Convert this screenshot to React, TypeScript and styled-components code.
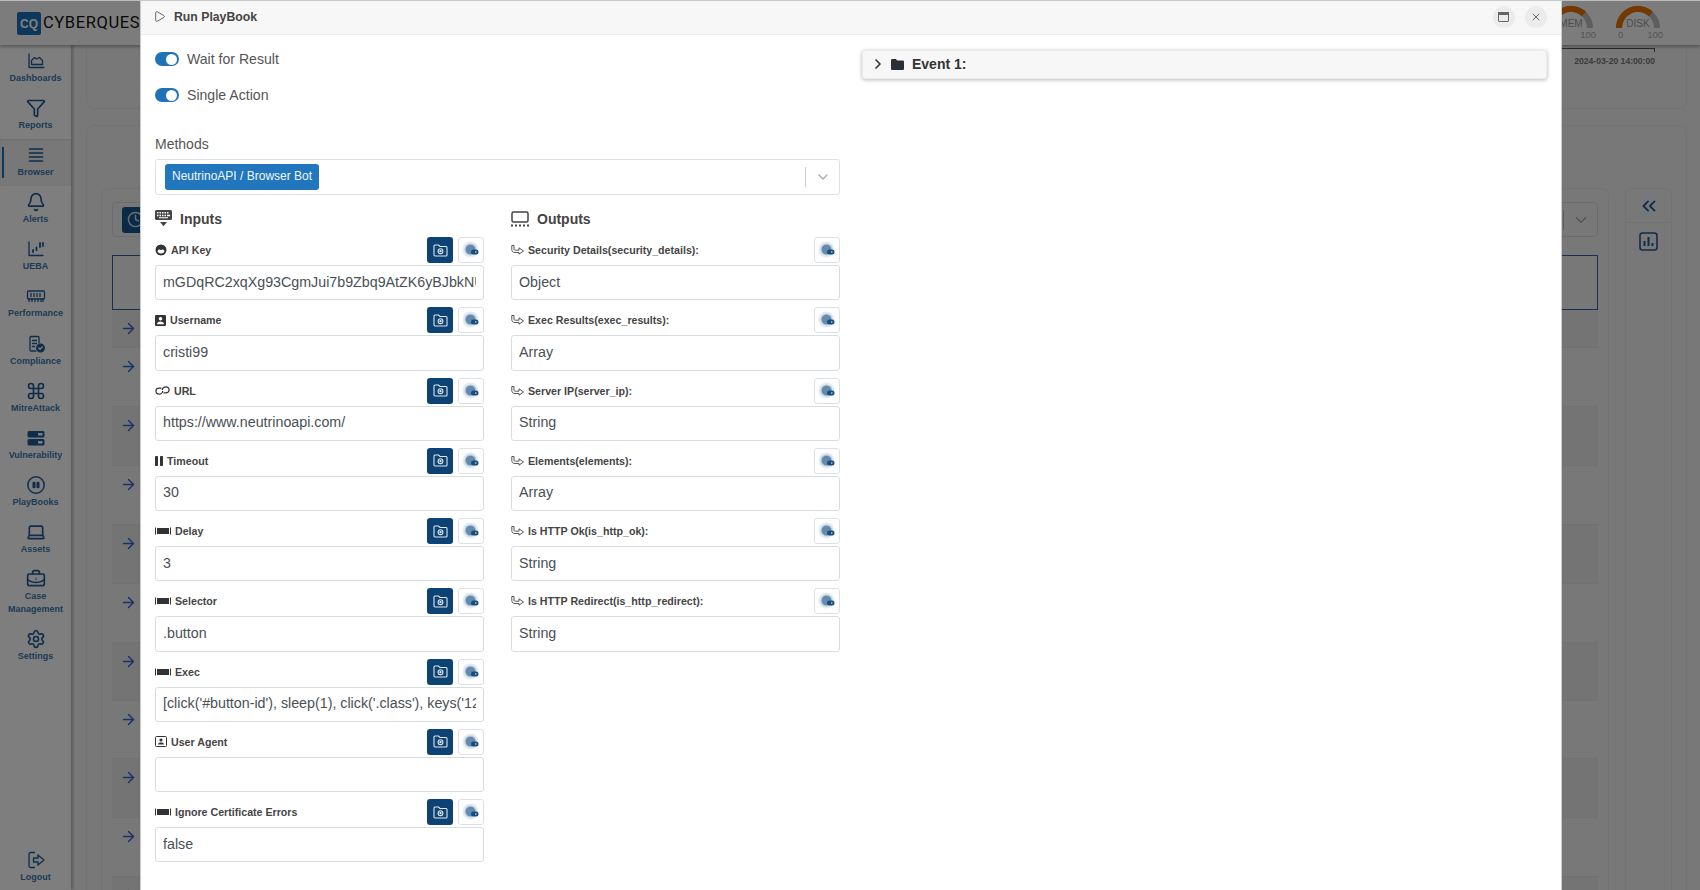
import React from 'react';
import styled, { createGlobalStyle } from 'styled-components';
import { ArrowRight, Bell, ChevronDown, ChevronRight, ChevronsLeft, Clock, Command, Filter, Laptop, BriefcaseBusiness, Settings, X, Play } from 'lucide-react';

const Global = createGlobalStyle`
  html, body { margin: 0; padding: 0; height: 100%; overflow: hidden; background: #fff; }
  body { font-family: "Liberation Sans", Arial, sans-serif; }
  * { box-sizing: border-box; }
`;

const Screen = styled.div`
  position: relative;
  width: 1700px;
  height: 890px;
  overflow: hidden;
  display: flex;
  flex-direction: column;
  background: #f1f1f1;
`;
const TopBar = styled.header`
  height: 45px;
  flex: none;
  background: #f9f9f9;
  box-shadow: 0 2px 3px rgba(0,0,0,.3);
  display: flex;
  align-items: flex-start;
  position: relative;
  z-index: 2;
`;
const Logo = styled.div`
  display: flex;
  align-items: center;
  gap: 2px;
  padding: 12px 0 0 17px;
`;
const LogoMark = styled.div`
  width: 24px;
  height: 23px;
  border-radius: 2px;
  background: #1b70b8;
  color: #fff;
  font: bold 12px "Liberation Sans", sans-serif;
  display: flex;
  align-items: center;
  justify-content: center;
`;
const LogoText = styled.span`
  font: 16.5px "Roboto", sans-serif;
  letter-spacing: .6px;
  color: #111;
  margin-top: -2px;
`;
const Gauges = styled.div`
  margin-left: auto;
  margin-right: 40px;
  display: flex;
  gap: 23px;
  padding-top: 5px;
`;
const Gauge = styled.div`
  width: 44px;
  position: relative;
  height: 36px;
`;
const GaugeLabel = styled.span`
  position: absolute;
  left: 0;
  right: 0;
  top: 13px;
  text-align: center;
  font: 10px "Liberation Sans", sans-serif;
  color: #999;
`;
const GaugeScale = styled.div`
  position: absolute;
  left: 2px;
  right: -3px;
  top: 24px;
  display: flex;
  justify-content: space-between;
  font: 9.5px "Liberation Sans", sans-serif;
  color: #aaa;
`;
const Body = styled.div`
  flex: 1;
  display: flex;
  min-height: 0;
`;
const Sidebar = styled.nav`
  width: 71px;
  flex: none;
  background: #fdfdfd;
  box-shadow: 2px 0 3px rgba(0,0,0,.25);
  display: flex;
  flex-direction: column;
  z-index: 1;
`;
const NavItem = styled.div<{ $active?: boolean; $bottom?: boolean; $tall?: boolean }>`
  position: relative;
  height: ${p => (p.$tall ? '60px' : '47.1px')};
  flex: none;
  padding-top: ${p => (p.$bottom ? '7px' : '6px')};
  display: flex;
  flex-direction: column;
  align-items: center;
  color: #1f5a94;
  background: ${p => (p.$active ? '#f0f0f0' : 'transparent')};
  margin-top: ${p => (p.$bottom ? 'auto' : '0')};
  ${p => p.$active ? `box-shadow: inset 0 1px 2px rgba(0,0,0,.1);` : ''}
  svg { width: 20px; height: 20px; display: block; flex: none; }
`;
const ActiveBar = styled.i`
  position: absolute;
  left: 2px;
  top: 8px;
  bottom: 8px;
  width: 1.5px;
  background: #1b70b8;
`;
const NavLabel = styled.span`
  font: bold 9px/13px "Liberation Sans", sans-serif;
  text-align: center;
  margin-top: 1px;
  color: #3a76ae;
`;
const Main = styled.main`
  flex: 1;
  min-width: 0;
  padding: 0 13px 0 15px;
  display: flex;
  flex-direction: column;
  gap: 16px;
`;
const TimeCard = styled.section`
  height: 64px;
  flex: none;
  border: 1px solid #e6e6e6;
  border-top: none;
  border-radius: 0 0 8px 8px;
  display: flex;
  flex-direction: column;
  align-items: flex-end;
  padding: 3px 31px 0 0;
`;
const TimeLine = styled.div`
  width: 120px;
  height: 4px;
  border-top: 1px solid #555;
  border-right: 1px solid #555;
`;
const TimeStamp = styled.span`
  font: bold 8.6px/14px "Liberation Sans", sans-serif;
  color: #777;
  margin-top: 2px;
  white-space: nowrap;
`;
const OuterCard = styled.section`
  flex: 1;
  border: 1px solid #e6e6e6;
  border-radius: 8px 8px 0 0;
  border-bottom: none;
  padding: 62px 14px 0 14px;
  display: flex;
  gap: 16px;
  min-height: 0;
`;
const InnerCard = styled.div`
  flex: 1;
  min-width: 0;
  border: 1px solid #e6e6e6;
  border-bottom: none;
  border-radius: 8px 8px 0 0;
  padding: 13px 10px 0 10px;
`;
const Toolbar = styled.div`
  height: 35px;
  border: 1px solid #d8d8d8;
  border-radius: 4px;
  padding-left: 9px;
  padding-right: 7px;
  display: flex;
  align-items: center;
  justify-content: space-between;
`;
const ClockButton = styled.div`
  width: 26px;
  height: 26px;
  background: #14568f;
  border-radius: 3px;
  color: #ddd;
  display: flex;
  align-items: center;
  justify-content: center;
`;
const SelectEnd = styled.div`
  display: flex;
  align-items: center;
  gap: 8px;
  color: #aaa;
  &::before { content: ''; width: 1px; height: 20px; background: #bbb; }
`;
const TableBox = styled.div`
  margin-top: 18px;
  height: 55px;
  border: 1px solid #2d62a0;
`;
const Row = styled.div<{ $stripe: boolean; $h: number }>`
  height: ${p => p.$h}px;
  padding: 10px 0 0 8px;
  color: #2a62d0;
  background: ${p => (p.$stripe ? '#e9e9e9' : 'transparent')};
  border-bottom: 1px solid #e2e2e2;
  svg { display: block; }
`;
const SidePanel = styled.aside`
  width: 47px;
  flex: none;
  border: 1px solid #e6e6e6;
  border-bottom: none;
  border-radius: 6px 6px 0 0;
  color: #1f5a94;
  display: flex;
  flex-direction: column;
  align-items: center;
`;
const PanelHead = styled.div`
  width: 100%;
  height: 34px;
  display: flex;
  align-items: center;
  justify-content: center;
  border-bottom: 1px solid #e4e4e4;
`;
const PanelChart = styled.div`
  margin-top: 9px;
`;
const Overlay = styled.div`
  position: absolute;
  inset: 0;
  background: rgba(0,0,0,.5);
  z-index: 5;
  border-top: 1px solid rgba(255,255,255,.5);
`;
const Modal = styled.div`
  position: absolute;
  left: 140px;
  top: 0;
  width: 1422px;
  height: 890px;
  background: #fff;
  border: 1px solid #c9c9c9;
  border-bottom: none;
  z-index: 6;
  display: flex;
  flex-direction: column;
`;
const ModalHead = styled.div`
  height: 33.5px;
  flex: none;
  background: #f7f7f7;
  border-bottom: 1px solid #e9ecef;
  display: flex;
  align-items: center;
  padding: 0 14px 1px 12px;
  color: #444;
`;
const ModalTitle = styled.span`
  font: bold 12.25px "Liberation Sans", sans-serif;
  color: #444;
  margin-left: 8px;
`;
const HeadButton = styled.button`
  width: 22px;
  height: 22px;
  border: 0;
  padding: 0;
  border-radius: 50%;
  background: #ececec;
  color: #666;
  display: flex;
  align-items: center;
  justify-content: center;
  margin-left: 10.5px;
  &:first-of-type { margin-left: auto; }
`;
const ModalBody = styled.div`
  flex: 1;
  display: grid;
  grid-template-columns: 685px 685px;
  column-gap: 22px;
  padding: 0 0 0 14px;
  min-height: 0;
`;
const LeftPane = styled.div`
  display: flex;
  flex-direction: column;
  margin-top: -.5px;
`;
const ToggleRow = styled.label<{ $first?: boolean }>`
  display: flex;
  align-items: center;
  gap: 8px;
  height: 16px;
  margin-top: ${p => (p.$first ? '17px' : '20px')};
  font-size: 14.1px;
  color: #555;
`;
const Toggle = styled.span`
  width: 24px;
  height: 14.5px;
  border-radius: 8px;
  background: #1f72b8;
  display: flex;
  justify-content: flex-end;
  align-items: center;
  padding-right: 2px;
  &::after { content: ''; width: 11px; height: 11px; border-radius: 50%; background: #fff; }
`;
const MethodsLabel = styled.div`
  font-size: 14px;
  line-height: 16px;
  color: #555;
  margin-top: 33px;
`;
const MethodsSelect = styled.div`
  margin-top: 7px;
  height: 36px;
  border: 1px solid #dde1e5;
  border-radius: 3px;
  display: flex;
  align-items: center;
  padding: 0 8px 0 9px;
`;
const Tag = styled.span`
  height: 26px;
  padding: 0 7px;
  background: #2176bd;
  border-radius: 3px;
  color: #f0f6fb;
  font-size: 12px;
  line-height: 25px;
  white-space: nowrap;
`;
const SelectTail = styled.div`
  margin-left: auto;
  display: flex;
  align-items: center;
  gap: 9px;
  color: #aaa;
  &::before { content: ''; width: 1px; height: 20px; background: #ccc; }
`;
const Columns = styled.div`
  display: grid;
  grid-template-columns: 328.5px 328.5px;
  column-gap: 27.5px;
  margin-top: 14px;
`;
const Column = styled.div``;
const ColumnHead = styled.div`
  height: 19px;
  display: flex;
  align-items: center;
  gap: 8px;
  font: bold 14px "Liberation Sans", sans-serif;
  color: #444;
  margin-bottom: 9px;
`;
const Field = styled.div`
  height: 70.25px;
`;
const FieldTop = styled.div`
  height: 26px;
  display: flex;
  align-items: center;
  gap: 4.5px;
  margin-bottom: 2px;
`;
const FieldLabel = styled.div`
  display: flex;
  align-items: center;
  gap: 4px;
  font: bold 10.65px "Liberation Sans", sans-serif;
  color: #444;
  margin-right: auto;
  svg { flex: none; color: #333; }
`;
const CamButton = styled.button`
  width: 26px;
  height: 26px;
  padding: 0;
  border: 0;
  border-radius: 3px;
  background: #0d4374;
  color: #dfe6ee;
  display: flex;
  align-items: center;
  justify-content: center;
`;
const VarButton = styled.button`
  width: 26px;
  height: 26px;
  padding: 0;
  border: 1px solid #dde1e5;
  border-radius: 3px;
  background: #fff;
  display: flex;
  align-items: center;
  justify-content: center;
`;
const Input = styled.input`
  display: block;
  width: 100%;
  height: 35.25px;
  border: 1px solid #d8dde2;
  border-radius: 3px;
  padding: 0 7px 2px;
  font: 14.25px "Liberation Sans", sans-serif;
  color: #495057;
  background: #fff;
  outline: none;
`;
const EventBar = styled.div`
  margin-top: 15px;
  height: 29.5px;
  width: 685px;
  background: #f7f7f7;
  border: 1px solid #eaeaea;
  border-radius: 3px;
  box-shadow: 0 1px 4px rgba(0,0,0,.28);
  display: flex;
  align-items: center;
  padding-left: 7px;
  gap: 5px;
  font: bold 14px "Liberation Sans", sans-serif;
  color: #333;
`;
const EventTitle = styled.span`
  margin-left: 3px;
`;

const FaceIcon = () => (
  <svg width="12" height="12" viewBox="0 0 12 12"><path fill="currentColor" fillRule="evenodd" d="M6 .5a5.5 5.5 0 1 1 0 11 5.5 5.5 0 0 1 0-11zM2.5 7c0 .9 1.4 2.6 3.5 2.6S9.500 7.900 9.500 7c-.6-.9-1.100-1.500-1.800-1.500-.7 0-1 .5-1.700.5s-1-.5-1.700-.5C3.600 5.500 3.100 6.100 2.500 7z"/></svg>
);
const UserBoxIcon = () => (
  <svg width="11" height="11" viewBox="0 0 11 11"><path fill="currentColor" fillRule="evenodd" d="M1 0h9a1 1 0 0 1 1 1v9a1 1 0 0 1-1 1H1a1 1 0 0 1-1-1V1a1 1 0 0 1 1-1zm4.500 2a1.800 1.800 0 1 0 0 3.600 1.800 1.800 0 0 0 0-3.600zM2 9.200h7c0-1.700-1.600-2.600-3.500-2.600S2 7.500 2 9.200z"/></svg>
);
const LinkIcon = () => (
  <svg width="15" height="11" viewBox="0 0 15 11" fill="none" stroke="currentColor" strokeWidth="1.200"><path d="M6.500 3.200 H4.300 C2.400 3.200 1 4.600 .9 6 C.8 7.700 2.200 9.200 4 9.200 C6 9.200 7.500 7.700 7.800 6"/><path d="M8.500 7.800 H10.700 C12.600 7.800 14 6.400 14.100 5 C14.200 3.300 12.800 1.800 11 1.800 C9 1.800 7.500 3.300 7.200 5"/></svg>
);
const PauseIcon = () => (
  <svg width="8" height="10" viewBox="0 0 8 10"><rect x="0" y="0" width="3" height="10" rx=".7" fill="currentColor"/><rect x="5" y="0" width="3" height="10" rx=".7" fill="currentColor"/></svg>
);
const BarIcon = () => (
  <svg width="16" height="8" viewBox="0 0 16 8"><rect x="0" y=".5" width="1" height="7" fill="currentColor"/><rect x="2" y="1" width="12" height="6" fill="currentColor"/><rect x="15" y=".5" width="1" height="7" fill="currentColor"/></svg>
);
const AgentIcon = () => (
  <svg width="12" height="11" viewBox="0 0 12 11"><rect x=".5" y=".5" width="11" height="10" rx="1" fill="none" stroke="currentColor"/><circle cx="6" cy="4" r="1.600" fill="currentColor"/><path fill="currentColor" d="M3 8.500c0-1.500 1.300-2.100 3-2.100s3 .6 3 2.100z"/></svg>
);
const ReturnIcon = () => (
  <svg width="13" height="10" viewBox="0 0 13 10" fill="none" stroke="#444" strokeWidth=".9" strokeLinejoin="round"><path d="M.8 .5 H3 V4 C3 5 3.500 5.200 4.500 5.200 H8 V2.800 L12.500 6 L8 9.200 V7.500 H4 C2 7.500 .8 6.500 .8 4.500 Z"/></svg>
);
const KeyboardHideIcon = () => (
  <svg width="17" height="17" viewBox="0 0 17 17"><path fill="currentColor" fillRule="evenodd" d="M1.500 0h14A1.500 1.500 0 0 1 17 1.500v7a1.500 1.500 0 0 1-1.500 1.500h-14A1.500 1.500 0 0 1 0 8.500v-7A1.500 1.500 0 0 1 1.500 0zM2 2v1.500h1.500V2zm2.500 0v1.500H6V2zM7 2v1.500h1.500V2zm2.500 0v1.500H11V2zM12 2v1.500h1.500V2zM2 4.800v1.500h1.500V4.800zm2.500 0v1.500H6V4.800zm2.500 0v1.500h1.500V4.800zm2.500 0v1.500H11V4.800zm2.500 0v1.500h3V4.800zM4 7.300v1h9v-1z"/><path fill="currentColor" d="M5 12h7l-3.500 4.200z"/></svg>
);
const MonitorDotsIcon = () => (
  <svg width="18" height="16" viewBox="0 0 18 16"><rect x="1" y="1" width="16" height="10" rx="1.500" fill="none" stroke="currentColor" strokeWidth="1.500"/><g fill="currentColor"><rect x="0" y="13.500" width="2" height="2"/><rect x="4" y="13.500" width="2" height="2"/><rect x="8" y="13.500" width="2" height="2"/><rect x="12" y="13.500" width="2" height="2"/><rect x="16" y="13.500" width="2" height="2"/></g></svg>
);
const CameraFolderIcon = () => (
  <svg width="15" height="13" viewBox="0 0 15 13" fill="none" stroke="currentColor" strokeWidth="1.100"><path d="M2 1h3.500l1.500 1.500H13a1 1 0 0 1 1 1V11a1 1 0 0 1-1 1H2a1 1 0 0 1-1-1V2a1 1 0 0 1 1-1z"/><circle cx="7.500" cy="7.200" r="2.400"/><circle cx="7.500" cy="7.200" r=".6" fill="currentColor"/></svg>
);
const VarIcon = () => (
  <svg width="24" height="24" viewBox="0 0 24 24"><circle cx="11.500" cy="11.500" r="8" fill="#e4ebf1"/><circle cx="11.500" cy="11.500" r="6" fill="#b6c7d7"/><circle cx="11.500" cy="11.500" r="4.800" fill="#648aad"/><rect x="12" y="11.500" width="7.500" height="5" rx="2.500" fill="#174d7e"/><circle cx="16.800" cy="14" r=".8" fill="#dfe7ee"/></svg>
);
const WindowIcon = () => (
  <svg width="11" height="10" viewBox="0 0 11 10" fill="none" stroke="currentColor"><rect x=".5" y=".5" width="10" height="9" rx=".5"/><rect x=".5" y=".5" width="10" height="2" fill="currentColor"/></svg>
);
const FolderIcon = () => (
  <svg width="13" height="11" viewBox="0 0 13 11"><path fill="#2a2f36" d="M1.200 0h3.600l1.400 1.500h5.600A1.200 1.200 0 0 1 13 2.700v7.100A1.200 1.200 0 0 1 11.800 11H1.200A1.200 1.200 0 0 1 0 9.800V1.200A1.200 1.200 0 0 1 1.200 0z"/></svg>
);
const BaseNav = ({ children }: { children: React.ReactNode }) => (
  <svg viewBox="0 0 20 20" fill="none" stroke="currentColor" strokeWidth="1.300" strokeLinecap="round" strokeLinejoin="round">{children}</svg>
);
const navIcons: Record<string, React.ReactNode> = {
  Dashboards: <BaseNav><path d="M3 3v13.500h15"/><path d="M5.500 13.500v-4l3-3 2 1.500 3-1.500 3 3v4z"/></BaseNav>,
  Browser: <BaseNav><path strokeWidth="1.700" d="M3.500 4h13M3.500 8h13M3.500 12h13M3.500 16h13"/></BaseNav>,
  UEBA: <BaseNav><path d="M3 3v13.500h14"/><path strokeWidth="1.800" d="M7 13v-2M10.500 11V8.500M14 8V4M17 7V4"/></BaseNav>,
  Performance: <BaseNav><rect x="1.500" y="5" width="17" height="8" rx="1"/><path d="M5 7.500v3M8 7.500v3M11 7.500v3M14 7.500v3M3 13v2.500M6 13v2.500M9 13v2.500M12 13v2.500M15 13v2.500M17 13v2.500"/></BaseNav>,
  Compliance: <BaseNav><path d="M13 9V3.500A1 1 0 0 0 12 2.500H5a1 1 0 0 0-1 1V16a1 1 0 0 0 1 1h5"/><path d="M6.500 6.500h4M6.500 9.500h4M6.500 12.500h2"/><circle cx="14.500" cy="14" r="3.800" fill="currentColor"/><path stroke="#fff" d="M12.800 14l1.200 1.200 2.200-2.200"/></BaseNav>,
  Vulnerability: <svg viewBox="0 0 20 20" fill="currentColor"><path fillRule="evenodd" d="M3 3h14a1.500 1.500 0 0 1 1.500 1.500V8A1.500 1.500 0 0 1 17 9.500H3A1.500 1.500 0 0 1 1.500 8V4.500A1.500 1.500 0 0 1 3 3zm9 2v2.500h4.500V5z"/><path fillRule="evenodd" d="M3 11h14a1.500 1.500 0 0 1 1.500 1.500V16a1.500 1.500 0 0 1-1.500 1.500H3A1.500 1.500 0 0 1 1.500 16v-3.500A1.500 1.500 0 0 1 3 11zm9 2v2.500h4.500V13z"/></svg>,
  PlayBooks: <svg viewBox="0 0 20 20"><circle cx="10" cy="10" r="8.200" fill="none" stroke="currentColor" strokeWidth="1.500"/><rect x="6.500" y="6.800" width="3" height="6.400" rx="1" fill="currentColor"/><rect x="10.500" y="6.800" width="3" height="6.400" rx="1" fill="currentColor"/></svg>,
  Logout: <BaseNav><path d="M8.500 2.500H4.500a1.500 1.500 0 0 0-1.500 1.500v12a1.500 1.500 0 0 0 1.500 1.500h4"/><path d="M7.500 8h4.500V5l6 5-6 5v-3H7.500z"/></BaseNav>,
};

const navItems = [
  { label: 'Dashboards' },
  { label: 'Reports', icon: <Filter /> },
  { label: 'Browser', active: true },
  { label: 'Alerts', icon: <Bell /> },
  { label: 'UEBA' },
  { label: 'Performance' },
  { label: 'Compliance' },
  { label: 'MitreAttack', icon: <Command /> },
  { label: 'Vulnerability' },
  { label: 'PlayBooks' },
  { label: 'Assets', icon: <Laptop /> },
  { label: 'Case Management', icon: <BriefcaseBusiness />, tall: true },
  { label: 'Settings', icon: <Settings /> },
];

const rows = [38, 58.500, 59, 59, 59, 59, 58.500, 58, 59, 59, 59];

const inputs = [
  { label: 'API Key', icon: <FaceIcon />, value: 'mGDqRC2xqXg93CgmJui7b9Zbq9AtZK6yBJbkNUxyTQ4vP' },
  { label: 'Username', icon: <UserBoxIcon />, value: 'cristi99' },
  { label: 'URL', icon: <LinkIcon />, value: 'https://www.neutrinoapi.com/' },
  { label: 'Timeout', icon: <PauseIcon />, value: '30' },
  { label: 'Delay', icon: <BarIcon />, value: '3' },
  { label: 'Selector', icon: <BarIcon />, value: '.button' },
  { label: 'Exec', icon: <BarIcon />, value: "[click('#button-id'), sleep(1), click('.class'), keys('12345'), sleep(2)]" },
  { label: 'User Agent', icon: <AgentIcon />, value: '' },
  { label: 'Ignore Certificate Errors', icon: <BarIcon />, value: 'false' },
];
const outputs = [
  { label: 'Security Details(security_details):', value: 'Object' },
  { label: 'Exec Results(exec_results):', value: 'Array' },
  { label: 'Server IP(server_ip):', value: 'String' },
  { label: 'Elements(elements):', value: 'Array' },
  { label: 'Is HTTP Ok(is_http_ok):', value: 'String' },
  { label: 'Is HTTP Redirect(is_http_redirect):', value: 'String' },
];

const GaugeArc = () => (
  <svg width="44" height="24" viewBox="0 0 44 24" fill="none" strokeWidth="6">
    <path d="M3 23 A19 19 0 0 1 41 23" stroke="#bdbdbd" />
    <path d="M3 23 A19 19 0 0 1 35 9" stroke="#e67300" />
  </svg>
);

export default function App() {
  return (
    <Screen>
      <Global />
      <TopBar>
        <Logo>
          <LogoMark>CQ</LogoMark>
          <LogoText>CYBERQUEST</LogoText>
        </Logo>
        <Gauges>
          <Gauge><GaugeArc /><GaugeLabel>MEM</GaugeLabel><GaugeScale><span>0</span><span>100</span></GaugeScale></Gauge>
          <Gauge><GaugeArc /><GaugeLabel>DISK</GaugeLabel><GaugeScale><span>0</span><span>100</span></GaugeScale></Gauge>
        </Gauges>
      </TopBar>
      <Body>
        <Sidebar>
          {navItems.map(n => (
            <NavItem key={n.label} $active={n.active} $tall={n.tall}>
              {n.active && <ActiveBar />}
              {n.icon ?? navIcons[n.label]}
              <NavLabel>{n.label}</NavLabel>
            </NavItem>
          ))}
          <NavItem $bottom>
            {navIcons.Logout}
            <NavLabel>Logout</NavLabel>
          </NavItem>
        </Sidebar>
        <Main>
          <TimeCard>
            <TimeLine />
            <TimeStamp>2024-03-20 14:00:00</TimeStamp>
          </TimeCard>
          <OuterCard>
            <InnerCard>
              <Toolbar>
                <ClockButton><Clock size={17} /></ClockButton>
                <SelectEnd><ChevronDown size={18} /></SelectEnd>
              </Toolbar>
              <TableBox />
              {rows.map((h, i) => (
                <Row key={i} $stripe={i % 2 === 0} $h={h}><ArrowRight size={17} /></Row>
              ))}
            </InnerCard>
            <SidePanel>
              <PanelHead><ChevronsLeft size={22} /></PanelHead>
              <PanelChart>
                <svg width="19" height="19" viewBox="0 0 19 19" fill="none" stroke="currentColor" strokeWidth="1.600"><rect x="1" y="1" width="17" height="17" rx="2.500"/><path strokeWidth="2" d="M5.500 14V9M9.500 14V5M13.500 14v-3"/></svg>
              </PanelChart>
            </SidePanel>
          </OuterCard>
        </Main>
      </Body>
      <Overlay />
      <Modal>
        <ModalHead>
          <Play size={13} strokeWidth={1.500} />
          <ModalTitle>Run PlayBook</ModalTitle>
          <HeadButton><WindowIcon /></HeadButton>
          <HeadButton><X size={12} /></HeadButton>
        </ModalHead>
        <ModalBody>
          <LeftPane>
            <ToggleRow $first><Toggle />Wait for Result</ToggleRow>
            <ToggleRow><Toggle />Single Action</ToggleRow>
            <MethodsLabel>Methods</MethodsLabel>
            <MethodsSelect>
              <Tag>NeutrinoAPI / Browser Bot</Tag>
              <SelectTail><ChevronDown size={16} /></SelectTail>
            </MethodsSelect>
            <Columns>
              <Column>
                <ColumnHead><KeyboardHideIcon />Inputs</ColumnHead>
                {inputs.map(f => (
                  <Field key={f.label}>
                    <FieldTop>
                      <FieldLabel>{f.icon}{f.label}</FieldLabel>
                      <CamButton><CameraFolderIcon /></CamButton>
                      <VarButton><VarIcon /></VarButton>
                    </FieldTop>
                    <Input readOnly value={f.value} />
                  </Field>
                ))}
              </Column>
              <Column>
                <ColumnHead><MonitorDotsIcon />Outputs</ColumnHead>
                {outputs.map(f => (
                  <Field key={f.label}>
                    <FieldTop>
                      <FieldLabel><ReturnIcon />{f.label}</FieldLabel>
                      <VarButton><VarIcon /></VarButton>
                    </FieldTop>
                    <Input readOnly value={f.value} />
                  </Field>
                ))}
              </Column>
            </Columns>
          </LeftPane>
          <EventBar>
            <ChevronRight size={16} strokeWidth={2.500} color="#333" />
            <FolderIcon />
            <EventTitle>Event 1:</EventTitle>
          </EventBar>
        </ModalBody>
      </Modal>
    </Screen>
  );
}
